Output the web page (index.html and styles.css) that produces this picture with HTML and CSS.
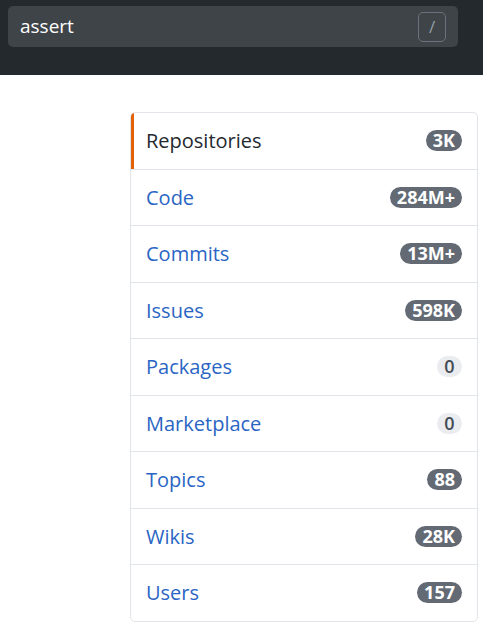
FILE: index.html
```html
<!DOCTYPE html>
<html lang="en">
<head>
<meta charset="utf-8">
<title>Search</title>
<link rel="stylesheet" href="styles.css">
</head>
<body>
<header class="header">
  <div class="search">
    <span class="search-text">assert</span>
    <kbd class="search-key">/</kbd>
  </div>
</header>
<main class="main">
  <nav class="menu">
    <a class="menu-item selected" href="#"><span>Repositories</span><span class="counter">3K</span></a>
    <a class="menu-item" href="#"><span>Code</span><span class="counter">284M+</span></a>
    <a class="menu-item" href="#"><span>Commits</span><span class="counter">13M+</span></a>
    <a class="menu-item" href="#"><span>Issues</span><span class="counter">598K</span></a>
    <a class="menu-item" href="#"><span>Packages</span><span class="counter light">0</span></a>
    <a class="menu-item" href="#"><span>Marketplace</span><span class="counter light">0</span></a>
    <a class="menu-item" href="#"><span>Topics</span><span class="counter">88</span></a>
    <a class="menu-item" href="#"><span>Wikis</span><span class="counter">28K</span></a>
    <a class="menu-item" href="#"><span>Users</span><span class="counter">157</span></a>
  </nav>
</main>
</body>
</html>
```
FILE: styles.css
```css
* { box-sizing: border-box; }
html, body { margin: 0; padding: 0; background: #fff; }
body { font-family: "Open Sans", "Noto Sans", sans-serif; }

.header {
  background: #24292e;
  height: 75px;
  padding: 6px 25px 0 8px;
}
.search {
  height: 41px;
  background: #3f4448;
  border-radius: 5px;
  display: flex;
  align-items: center;
  justify-content: space-between;
  padding: 0 12px 0 12px;
}
.search-text {
  color: #fff;
  font-size: 19px;
  line-height: 1;
}
.search-key {
  width: 28px;
  height: 30px;
  border: 1px solid #6a737d;
  border-radius: 5px;
  color: #959da5;
  font-family: "Open Sans", sans-serif;
  font-size: 17px;
  display: flex;
  align-items: center;
  justify-content: center;
}

.main {
  padding: 37px 5px 0 130px;
}
.menu {
  border: 1px solid #e1e4e8;
  border-radius: 5px;
  display: flex;
  flex-direction: column;
  overflow: hidden;
}
.menu-item {
  position: relative;
  display: flex;
  align-items: center;
  justify-content: space-between;
  padding: 12px 15px 12px 15px;
  line-height: 31.5px;
  font-size: 20px;
  color: #2a65c4;
  text-decoration: none;
  border-bottom: 1px solid #e1e4e8;
}
.menu-item:last-child { border-bottom: 0; }
.menu-item.selected { color: #24292e; }
.menu-item.selected::before {
  content: "";
  position: absolute;
  left: 0;
  top: 0;
  bottom: 0;
  width: 3px;
  background: #e36209;
}
.counter {
  background: #636a74;
  color: #fff;
  font-size: 18px;
  font-weight: 700;
  line-height: 21px;
  padding: 0 7px;
  border-radius: 11px;
  min-width: 25px;
  text-align: center;
}
.counter.light {
  background: #eaecef;
  color: #444d56;
  font-weight: 600;
}
```
